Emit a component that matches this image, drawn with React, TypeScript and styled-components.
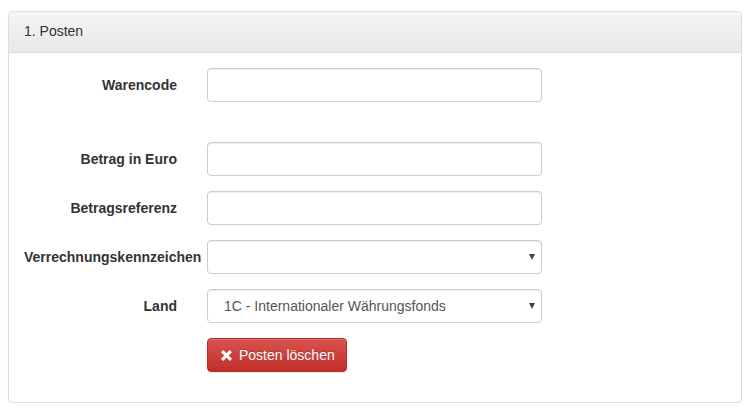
import React from "react";
import styled, { createGlobalStyle } from "styled-components";

const GlobalStyle = createGlobalStyle`
  body {
    margin: 0;
    font-family: "Liberation Sans", Arial, sans-serif;
    font-size: 14px;
    line-height: 1.42857;
    color: #333;
    background: #fff;
  }
`;

type Field = {
  label: string;
  kind: "input" | "select";
  value?: string;
  spaced?: boolean;
};

const fields: Field[] = [
  { label: "Warencode", kind: "input", spaced: true },
  { label: "Betrag in Euro", kind: "input" },
  { label: "Betragsreferenz", kind: "input" },
  { label: "Verrechnungskennzeichen", kind: "select", value: "" },
  { label: "Land", kind: "select", value: "1C - Internationaler Währungsfonds" },
];

const App = () => {
  return (
    <Page>
      <GlobalStyle />
      <Panel>
        <PanelHeading>1. Posten</PanelHeading>
        <PanelBody>
          {fields.map((field) => (
            <FormRow key={field.label} $spaced={field.spaced}>
              <Label>{field.label}</Label>
              {field.kind === "input" ? (
                <TextInput type="text" />
              ) : (
                <SelectWrap>
                  <Select defaultValue={field.value}>
                    <option value={field.value}>{field.value}</option>
                  </Select>
                  <Caret />
                </SelectWrap>
              )}
            </FormRow>
          ))}
          <FormRow $last>
            <span />
            <Actions>
              <DangerButton type="button">
                <svg width="11" height="11" viewBox="0 0 12 12">
                  <path
                    d="M2.4 0 L6 3.6 L9.6 0 L12 2.4 L8.4 6 L12 9.6 L9.6 12 L6 8.4 L2.4 12 L0 9.6 L3.6 6 L0 2.4 Z"
                    fill="#fff"
                  />
                </svg>
                Posten löschen
              </DangerButton>
            </Actions>
          </FormRow>
        </PanelBody>
      </Panel>
    </Page>
  );
};

const Page = styled.div`
  padding: 11px 8px 0 8px;
`;

const Panel = styled.div`
  width: 734px;
  box-sizing: border-box;
  border: 1px solid #ddd;
  border-radius: 4px;
  background: #fff;
  box-shadow: 0 1px 2px rgba(0, 0, 0, 0.05);
`;

const PanelHeading = styled.div`
  padding: 10px 15px;
  height: 20px;
  border-bottom: 1px solid #ddd;
  border-radius: 3px 3px 0 0;
  background: linear-gradient(to bottom, #f5f5f5 0%, #e8e8e8 100%);
  color: #333;
`;

const PanelBody = styled.div`
  padding: 15px 15px 15px 15px;
`;

const FormRow = styled.div<{ $spaced?: boolean; $last?: boolean }>`
  display: grid;
  grid-template-columns: 153px 335px;
  column-gap: 30px;
  margin-bottom: ${(p) => (p.$spaced ? "40px" : p.$last ? "15px" : "15px")};
`;

const Label = styled.label`
  padding-top: 8px;
  font-weight: bold;
  text-align: right;
  white-space: nowrap;
`;

const TextInput = styled.input`
  box-sizing: border-box;
  width: 335px;
  height: 34px;
  padding: 6px 12px;
  border: 1px solid #ccc;
  border-radius: 4px;
  box-shadow: inset 0 1px 1px rgba(0, 0, 0, 0.075);
  font-family: inherit;
  font-size: 14px;
  color: #555;
  outline: none;
`;

const SelectWrap = styled.div`
  position: relative;
  width: 335px;
  height: 34px;
`;

const Select = styled.select`
  box-sizing: border-box;
  width: 100%;
  height: 34px;
  padding: 6px 24px 6px 16px;
  border: 1px solid #ccc;
  border-radius: 4px;
  background: #fff;
  box-shadow: inset 0 1px 1px rgba(0, 0, 0, 0.075);
  font-family: inherit;
  font-size: 14px;
  color: #555;
  appearance: none;
  outline: none;
`;

const Caret = styled.span`
  position: absolute;
  right: 7px;
  top: 14px;
  width: 0;
  height: 0;
  border-left: 3px solid transparent;
  border-right: 3px solid transparent;
  border-top: 6px solid #444;
  pointer-events: none;
`;

const Actions = styled.div`
  display: flex;
`;

const DangerButton = styled.button`
  display: inline-flex;
  align-items: center;
  gap: 7px;
  height: 34px;
  padding: 6px 11px 6px 13px;
  border: 1px solid #b92c28;
  border-radius: 4px;
  background: linear-gradient(to bottom, #d9534f 0%, #c12e2a 100%);
  box-shadow: inset 0 1px 0 rgba(255, 255, 255, 0.15), 0 1px 1px rgba(0, 0, 0, 0.075);
  color: #fff;
  font-family: inherit;
  font-size: 14px;
  text-shadow: 0 -1px 0 rgba(0, 0, 0, 0.2);
  cursor: pointer;
`;

export default App;
